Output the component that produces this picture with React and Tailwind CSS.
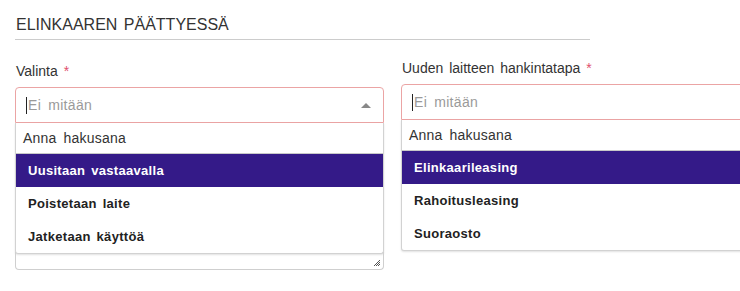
import React from 'react';

const font = { fontFamily: '"Liberation Sans", Arial, sans-serif' };

const Option = ({ label, active }) => (
    <div className={`h-[33px] flex items-center px-3 text-[13px] font-bold tracking-[0.3px] [word-spacing:2px] ${active ? 'bg-[#341a88] text-white' : 'text-[#222]'}`}>
        {label}
    </div>
);

const SelectOpen = ({ options, withArrow }) => (
    <div className="relative">
        <div className="h-[36px] border border-[#eba4a4] rounded-t-[4px] flex items-center pl-[10px] pr-3 bg-white">
            <span className="w-px h-[17px] bg-[#222] mr-px"></span>
            <span className="text-[14px] text-[#9a9a9a] tracking-[0.3px] [word-spacing:3px]">Ei mitään</span>
            {withArrow && (
                <span className="ml-auto w-0 h-0 border-l-[5px] border-r-[5px] border-b-[5px] border-l-transparent border-r-transparent border-b-[#888]"></span>
            )}
        </div>
        <div className="border border-t-0 border-[#d2d2d2] rounded-b-[3px] bg-white shadow-[0_1px_2px_rgba(0,0,0,0.12)]">
            <div className="h-[31px] flex items-center px-[7px] text-[14px] text-[#333] tracking-[0.2px] [word-spacing:3px] border-b border-[#c8c8c8]">Anna hakusana</div>
            {options.map((o, i) => <Option key={o} label={o} active={i === 0} />)}
        </div>
    </div>
);

export default function App() {
    return (
        <div className="w-[740px] h-[291px] bg-white overflow-hidden" style={font}>
            <div className="pl-[15px] pt-[13px]">
                <h2 className="text-[16px] text-[#333] pl-px w-[575px] h-[27px] border-b border-[#cccccc] [word-spacing:2px]">ELINKAAREN PÄÄTTYESSÄ</h2>
            </div>
            <div className="flex pl-[15px] gap-[17px]">
                <div className="w-[369px] shrink-0 pt-[21px]">
                    <div className="text-[14px] text-[#333] pl-px h-[26px] [word-spacing:2px]">Valinta <span className="text-[#e0506e]">*</span></div>
                    <div className="relative">
                        <SelectOpen withArrow options={['Uusitaan vastaavalla', 'Poistetaan laite', 'Jatketaan käyttöä']} />
                        <div className="h-[18px] -mt-[2px] border border-t-0 border-[#cfcfcf] rounded-b-[4px] relative">
                            <svg className="absolute right-[2px] bottom-[2px]" width="8" height="8" viewBox="0 0 8 8">
                                <path d="M7 1 L1 7 M7 3 L3 7 M7 5 L5 7" stroke="#555" strokeWidth="1" />
                            </svg>
                        </div>
                    </div>
                </div>
                <div className="w-[360px] shrink-0 pt-[18px]">
                    <div className="text-[14px] text-[#333] pl-px h-[26px] [word-spacing:2px]">Uuden laitteen hankintatapa <span className="text-[#e0506e]">*</span></div>
                    <div className="-mr-[20px]">
                        <SelectOpen options={['Elinkaarileasing', 'Rahoitusleasing', 'Suoraosto']} />
                    </div>
                </div>
            </div>
        </div>
    );
}
